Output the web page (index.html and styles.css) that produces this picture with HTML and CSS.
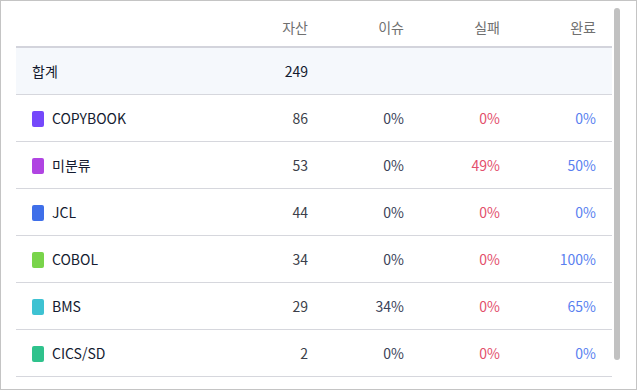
FILE: index.html
```html
<!DOCTYPE html>
<html lang="ko">
<head>
<meta charset="utf-8">
<link rel="stylesheet" href="styles.css">
</head>
<body>
<div class="panel">
  <div class="scroller">
    <table class="grid">
      <colgroup>
        <col class="c-name"><col class="c-num"><col class="c-num"><col class="c-num"><col class="c-num">
      </colgroup>
      <thead>
        <tr><th></th><th>자산</th><th>이슈</th><th>실패</th><th>완료</th></tr>
      </thead>
      <tbody>
        <tr class="total"><td class="name">합계</td><td class="num strong">249</td><td></td><td></td><td></td></tr>
        <tr><td class="name"><span class="sw sw-copy"></span>COPYBOOK</td><td class="num">86</td><td class="num issue">0%</td><td class="num fail">0%</td><td class="num done">0%</td></tr>
        <tr><td class="name"><span class="sw sw-unc"></span>미분류</td><td class="num">53</td><td class="num issue">0%</td><td class="num fail">49%</td><td class="num done">50%</td></tr>
        <tr><td class="name"><span class="sw sw-jcl"></span>JCL</td><td class="num">44</td><td class="num issue">0%</td><td class="num fail">0%</td><td class="num done">0%</td></tr>
        <tr><td class="name"><span class="sw sw-cobol"></span>COBOL</td><td class="num">34</td><td class="num issue">0%</td><td class="num fail">0%</td><td class="num done">100%</td></tr>
        <tr><td class="name"><span class="sw sw-bms"></span>BMS</td><td class="num">29</td><td class="num issue">34%</td><td class="num fail">0%</td><td class="num done">65%</td></tr>
        <tr><td class="name"><span class="sw sw-cics"></span>CICS/SD</td><td class="num">2</td><td class="num issue">0%</td><td class="num fail">0%</td><td class="num done">0%</td></tr>
      </tbody>
    </table>
  </div>
  <div class="thumb"></div>
</div>
</body>
</html>
```
FILE: styles.css
```css
* { box-sizing: border-box; }
html, body { margin: 0; padding: 0; background: #fff; }
body {
  font-family: "Noto Sans CJK KR", "Noto Sans", sans-serif;
  font-size: 14px;
  color: #333;
}
.panel {
  position: relative;
  width: 637px;
  height: 390px;
  border: 1px solid #c4c4c4;
  overflow: hidden;
}
.scroller {
  padding: 6px 0 0 15px;
}
.grid {
  width: 596px;
  border-collapse: collapse;
  table-layout: fixed;
}
.c-name { width: 212px; }
.c-num { width: 96px; }
.grid th {
  height: 40px;
  padding: 0 16px 0 0;
  text-align: right;
  font-weight: 400;
  color: #707070;
  border-bottom: 2px solid #d3d4dc;
  vertical-align: middle;
}
.grid td {
  height: 47px;
  padding: 0 16px 0 0;
  border-bottom: 1px solid #d6d7dd;
  vertical-align: middle;
}
.grid tr.total td { background: #f5f8fc; }
.grid td.name {
  padding-left: 16px;
  color: #141b30;
  font-weight: 400;
}
.grid td.num { text-align: right; color: #3c3f4a; }
.grid td.strong { color: #141b30; }
.grid td.issue { color: #3b4258; }
.grid td.fail { color: #e34f6c; }
.grid td.done { color: #5a7ff0; }
.sw {
  display: inline-block;
  width: 12px;
  height: 16px;
  border-radius: 2px;
  margin-right: 8px;
  vertical-align: -3px;
}
.sw-copy { background: #7548fb; }
.sw-unc { background: #b044e2; }
.sw-jcl { background: #3f6fe9; }
.sw-cobol { background: #79d44a; }
.sw-bms { background: #3ec2d2; }
.sw-cics { background: #2fc28c; }
.thumb {
  position: absolute;
  left: 613px;
  top: 7px;
  width: 6px;
  height: 352px;
  border-radius: 3px;
  background: #c1c1c1;
}
```
